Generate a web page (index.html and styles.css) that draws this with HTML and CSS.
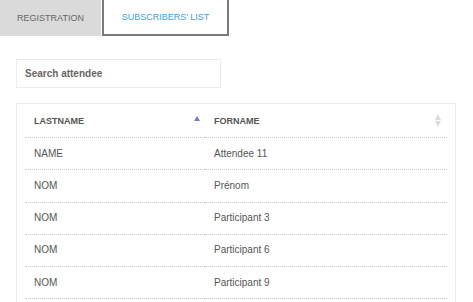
FILE: index.html
```html
<!DOCTYPE html>
<html lang="en">
<head>
    <meta charset="UTF-8">
    <meta name="viewport" content="width=device-width, initial-scale=1.0">
    <title>Subscribers' list</title>
    <link rel="stylesheet" href="styles.css">
</head>
<body>
    <div class="tabs">
        <div class="tab">REGISTRATION</div>
        <div class="tab active">SUBSCRIBERS' LIST</div>
    </div>

    <input type="text" class="search" placeholder="Search attendee">

    <div class="table-box">
        <table class="attendees">
            <thead>
                <tr>
                    <th class="col-last">LASTNAME<span class="sort-asc"></span></th>
                    <th>FORNAME<span class="sort-both"><i class="up"></i><i class="down"></i></span></th>
                </tr>
            </thead>
            <tbody>
                <tr><td>NAME</td><td>Attendee 11</td></tr>
                <tr><td>NOM</td><td>Prénom</td></tr>
                <tr><td>NOM</td><td>Participant 3</td></tr>
                <tr><td>NOM</td><td>Participant 6</td></tr>
                <tr><td>NOM</td><td>Participant 9</td></tr>
            </tbody>
        </table>
    </div>
</body>
</html>
```

FILE: styles.css
```css
body {
    font-family: "Liberation Sans", Arial, sans-serif;
    background-color: #fff;
    color: #555;
    margin: 0;
    padding: 0;
}
.tabs {
    display: flex;
    height: 36px;
}
.tab {
    width: 101px;
    height: 36px;
    box-sizing: border-box;
    background-color: #dadada;
    color: #666;
    font-size: 9px;
    display: flex;
    align-items: center;
    justify-content: center;
}
.tab.active {
    width: 127px;
    margin-left: 1px;
    background-color: #fff;
    color: #3a9fe6;
    border-style: solid;
    border-width: 0 2px 2px 2px;
    border-color: #7a7a7a;
}
.search {
    display: block;
    margin: 23px 0 0 16px;
    width: 205px;
    height: 29px;
    box-sizing: border-box;
    border: 1px solid #ececec;
    padding: 0 8px;
    font-family: inherit;
    font-size: 10px;
    font-weight: bold;
    outline: none;
}
.search::placeholder {
    color: #666;
}
.table-box {
    margin: 15px 0 0 16px;
    width: 440px;
    box-sizing: border-box;
    border: 1px solid #ececec;
    padding: 0 8px 4px;
}
.attendees {
    width: 100%;
    border-collapse: collapse;
    table-layout: fixed;
}
.attendees th,
.attendees td {
    text-align: left;
    padding: 9.65px 9px;
    line-height: 12px;
    border-bottom: 1px dotted #c8c8c8;
    position: relative;
}
.attendees th {
    font-size: 9px;
    font-weight: bold;
    color: #555;
    padding-top: 10.5px;
    padding-bottom: 10.5px;
}
.attendees td {
    font-size: 10px;
}
.col-last {
    width: 162px;
}
.sort-asc {
    position: absolute;
    right: 5px;
    top: 12px;
    width: 0;
    height: 0;
    border-left: 3px solid transparent;
    border-right: 3px solid transparent;
    border-bottom: 5px solid #7379dc;
}
.sort-both {
    position: absolute;
    right: 6px;
    top: 10px;
    display: flex;
    flex-direction: column;
    gap: 1px;
}
.sort-both i {
    display: block;
    width: 0;
    height: 0;
    border-left: 3px solid transparent;
    border-right: 3px solid transparent;
}
.sort-both .up {
    border-bottom: 6px solid #dcdcdc;
}
.sort-both .down {
    border-top: 6px solid #dcdcdc;
}
```
